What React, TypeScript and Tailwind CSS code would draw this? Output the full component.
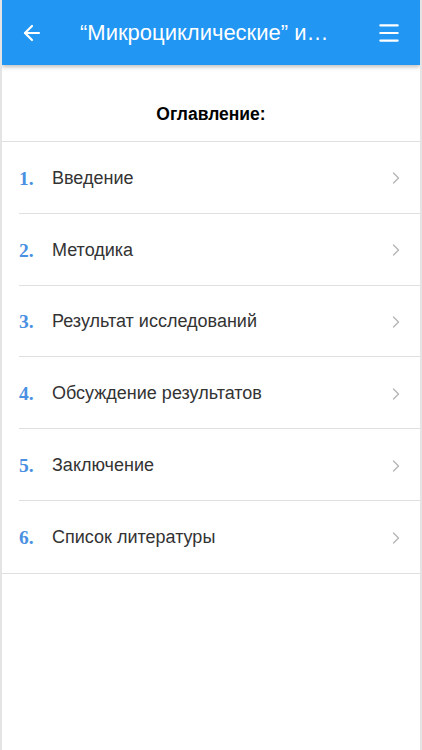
import { ArrowLeft, ChevronRight, Menu } from 'lucide-react';

const sections = [
  'Введение',
  'Методика',
  'Результат исследований',
  'Обсуждение результатов',
  'Заключение',
  'Список литературы',
];

export default function App() {
  return (
    <div
      className="flex h-[750px] w-[422px] flex-col overflow-hidden border-x-2 border-[#e4e4e4] bg-white"
      style={{ fontFamily: '"Liberation Sans", Arial, sans-serif' }}
    >
      <header className="z-10 flex h-[65px] shrink-0 items-center bg-[#2196f3] px-[18px] text-white shadow-[0_2px_4px_rgba(0,0,0,0.25)]">
        <ArrowLeft size={24} strokeWidth={2.2} />
        <h1 className="ml-[36px] whitespace-nowrap text-[22px] leading-none">
          “Микроциклические” и…
        </h1>
        <Menu size={26} strokeWidth={2} className="ml-auto" />
      </header>

      <div className="flex h-[77px] shrink-0 items-center justify-center border-b border-[#e0e0e0] pt-[23px]">
        <span className="text-[17.5px] font-bold text-black">Оглавление:</span>
      </div>

      <ul>
        {sections.map((title, i) => (
          <li key={title} className={i === sections.length - 1 ? 'border-b border-[#e0e0e0]' : 'pl-[17px]'}>
            <div
              className={
                'flex h-[71.8px] items-center pr-[14px] pt-[2px] ' +
                (i === sections.length - 1 ? 'pl-[17px]' : 'border-b border-[#e0e0e0]')
              }
            >
              <span
                className="w-[33px] text-[19.5px] font-bold text-[#4a90e2]"
                style={{ fontFamily: '"Liberation Serif", "Times New Roman", serif' }}
              >
                {i + 1}.
              </span>
              <span className="text-[18px] text-[#333]">{title}</span>
              <ChevronRight size={20} strokeWidth={1.6} className="ml-auto text-[#b5b5b5]" />
            </div>
          </li>
        ))}
      </ul>
    </div>
  );
}
